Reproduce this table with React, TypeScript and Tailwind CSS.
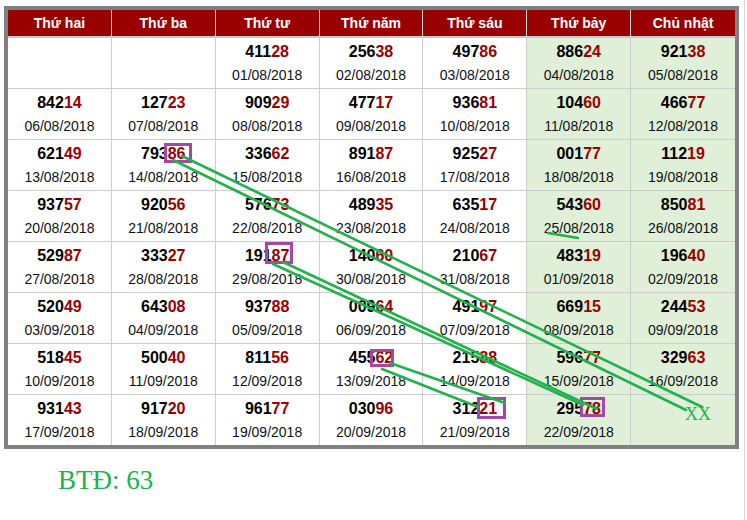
import React from "react";

type Cell = [string, string] | null;

const rows: Cell[][] = [
  [null, null, ["41128", "01/08/2018"], ["25638", "02/08/2018"], ["49786", "03/08/2018"], ["88624", "04/08/2018"], ["92138", "05/08/2018"]],
  [["84214", "06/08/2018"], ["12723", "07/08/2018"], ["90929", "08/08/2018"], ["47717", "09/08/2018"], ["93681", "10/08/2018"], ["10460", "11/08/2018"], ["46677", "12/08/2018"]],
  [["62149", "13/08/2018"], ["79386", "14/08/2018"], ["33662", "15/08/2018"], ["89187", "16/08/2018"], ["92527", "17/08/2018"], ["00177", "18/08/2018"], ["11219", "19/08/2018"]],
  [["93757", "20/08/2018"], ["92056", "21/08/2018"], ["57673", "22/08/2018"], ["48935", "23/08/2018"], ["63517", "24/08/2018"], ["54360", "25/08/2018"], ["85081", "26/08/2018"]],
  [["52987", "27/08/2018"], ["33327", "28/08/2018"], ["19187", "29/08/2018"], ["14060", "30/08/2018"], ["21067", "31/08/2018"], ["48319", "01/09/2018"], ["19640", "02/09/2018"]],
  [["52049", "03/09/2018"], ["64308", "04/09/2018"], ["93788", "05/09/2018"], ["00964", "06/09/2018"], ["49197", "07/09/2018"], ["66915", "08/09/2018"], ["24453", "09/09/2018"]],
  [["51845", "10/09/2018"], ["50040", "11/09/2018"], ["81156", "12/09/2018"], ["45562", "13/09/2018"], ["21588", "14/09/2018"], ["59677", "15/09/2018"], ["32963", "16/09/2018"]],
  [["93143", "17/09/2018"], ["91720", "18/09/2018"], ["96177", "19/09/2018"], ["03096", "20/09/2018"], ["31221", "21/09/2018"], ["29578", "22/09/2018"], null],
];

const headers = ["Thứ hai", "Thứ ba", "Thứ tư", "Thứ năm", "Thứ sáu", "Thứ bảy", "Chủ nhật"];

function DataCell({ cell, col, row }: { cell: Cell; col: number; row: number }) {
  const weekend = col >= 5;
  const last = col === 6;
  const lastRow = row === 7;
  const cls = [
    "flex flex-col items-center pt-[4px]",
    lastRow ? "h-[50px]" : "h-[51px] border-b border-[#cccccc]",
    last ? "" : "border-r border-[#cccccc]",
    weekend ? "bg-[#dfefd8]" : "bg-white",
  ].join(" ");
  return (
    <div className={cls}>
      {cell && (
        <>
          <div className="text-[16px] leading-[20px] font-bold text-black">
            {cell[0].slice(0, 3)}
            <span className="text-[#990000]">{cell[0].slice(3)}</span>
          </div>
          <div className="mt-[4px] text-[14px] leading-[18px] text-[#111111]">{cell[1]}</div>
        </>
      )}
    </div>
  );
}

export default function App() {
  return (
    <div className="relative w-[747px] h-[520px] bg-white font-['Liberation_Sans',Arial,sans-serif]">
      <div className="w-[745px] h-[520px] border-r border-[#d6d6d6] pl-[4px] pt-[6px]">
        <div className="w-[735px] border-[4px] border-[#808080]">
          <div className="grid grid-cols-7">
            {headers.map((h, i) => (
              <div
                key={h}
                className={
                  i === 6
                    ? "h-[28px] bg-[#990000] border-b-2 border-[#c8c8c8] text-white text-[14px] font-bold leading-[26px] text-center"
                    : "h-[28px] bg-[#990000] border-b-2 border-r border-b-[#c8c8c8] border-r-[#d8d8d8] text-white text-[14px] font-bold leading-[26px] text-center"
                }
              >
                {h}
              </div>
            ))}
            {rows.map((r, ri) =>
              r.map((c, ci) => <DataCell key={`${ri}-${ci}`} cell={c} col={ci} row={ri} />)
            )}
          </div>
        </div>
        <div className="mt-[18px] pl-[54px] text-[27px] leading-none text-[#22b14c] font-['Liberation_Serif','Times_New_Roman',serif]">
          BTĐ: 63
        </div>
      </div>

      <svg
        className="absolute left-0 top-0 pointer-events-none"
        width="747"
        height="520"
        viewBox="0 0 747 520"
        fill="none"
      >
        <g stroke="#a349a4" strokeWidth="3">
          <rect x="165.5" y="144.5" width="25" height="17" />
          <rect x="266.5" y="243.5" width="25" height="19" />
          <rect x="371.5" y="350.5" width="21" height="15" />
          <rect x="478.5" y="398.5" width="26" height="19" />
          <rect x="581.5" y="398.5" width="22" height="17" />
        </g>
        <g stroke="#22b14c" strokeWidth="2.6" strokeLinecap="round">
          <line x1="182" y1="156" x2="702" y2="407" />
          <line x1="173" y1="160" x2="686" y2="410" />
          <line x1="273" y1="264" x2="583" y2="405" />
          <line x1="283" y1="262" x2="597" y2="409" />
          <line x1="390" y1="363" x2="505" y2="403" />
          <line x1="382" y1="369" x2="478" y2="407" />
          <line x1="548" y1="233" x2="578" y2="238" />
        </g>
        <text
          x="685"
          y="420"
          fill="#22b14c"
          fontSize="18"
          fontFamily="'Liberation Serif', 'Times New Roman', serif"
        >
          XX
        </text>
      </svg>
    </div>
  );
}
